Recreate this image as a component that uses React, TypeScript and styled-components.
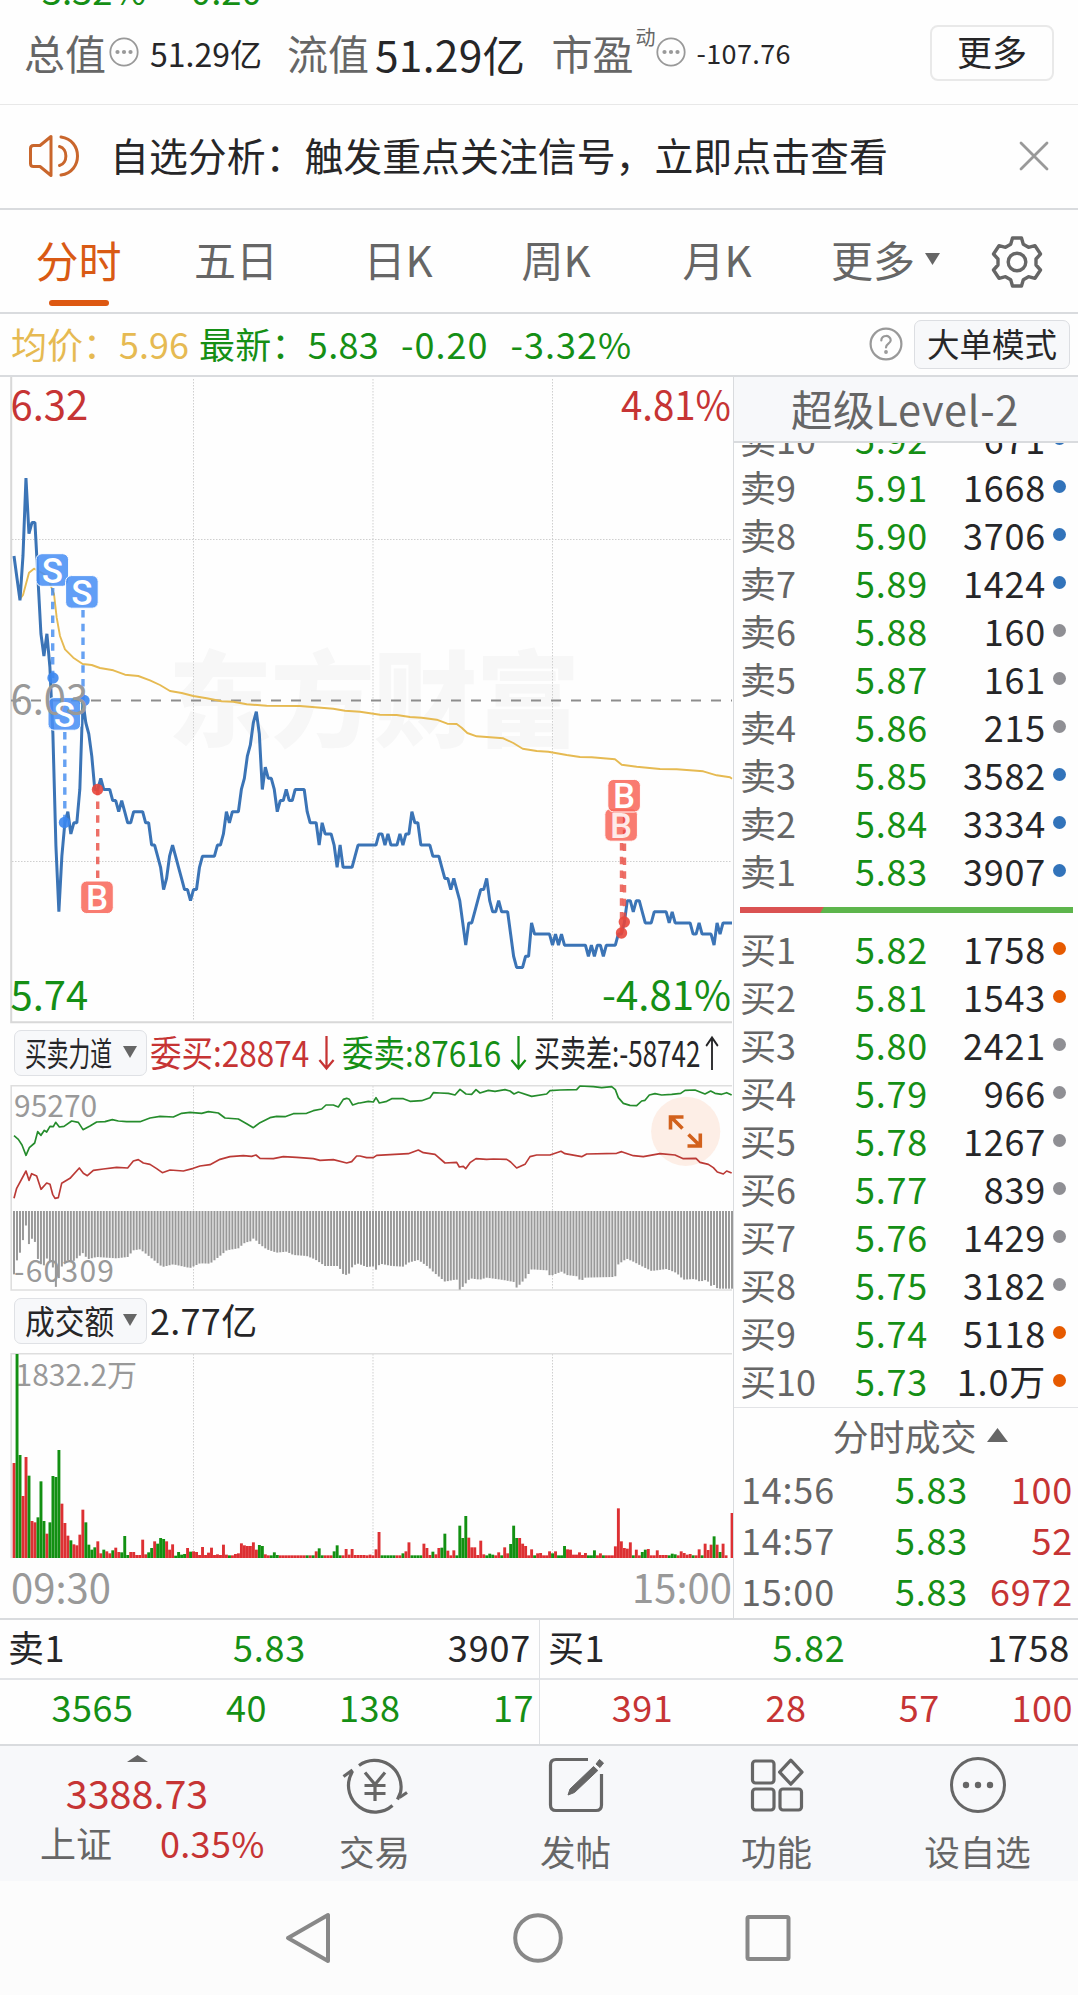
import React from "react";
import styled, { createGlobalStyle } from "styled-components";

const C = {
  green: "#158f15",
  red: "#c63434",
  blue: "#3b74b6",
  gold: "#e6ba52",
  orange: "#d95a14",
  text: "#262628",
  sub: "#666666",
  mute: "#999999",
  line: "#d9dbde",
  panel: "#f7f8fa",
};

const Global = createGlobalStyle`
  * { box-sizing: border-box; }
  body { margin: 0; background: #fefefe; }
  svg { display: block; flex: none; }
`;

const Page = styled.div`
  width: 1078px;
  height: 1995px;
  overflow: hidden;
  display: flex;
  flex-direction: column;
  background: #fefefe;
  color: ${C.text};
  font-family: "Noto Sans CJK SC", "Noto Sans", sans-serif;
`;

const Txt = styled.span<{ $s?: number; $c?: string; $ml?: number; $ls?: number }>`
  font-size: ${(p) => p.$s ?? 36}px;
  line-height: 1.2;
  color: ${(p) => p.$c ?? "inherit"};
  margin-left: ${(p) => p.$ml ?? 0}px;
  letter-spacing: ${(p) => p.$ls ?? 0}px;
  white-space: pre;
`;

/* ---------- header ---------- */

const ClippedLine = styled.div`
  height: 12px;
  flex: none;
  display: flex;
  align-items: flex-end;
  padding-left: 29px;
  margin-bottom: -12px;
`;

const Stats = styled.div`
  height: 105px;
  flex: none;
  display: flex;
  align-items: center;
  padding: 2px 24px 0 24px;
  border-bottom: 1px solid #e8e8e8;
`;

const StatItem = styled.div<{ $ml?: number }>`
  display: flex;
  align-items: center;
  margin-left: ${(p) => p.$ml ?? 0}px;
`;

const Icon = styled.div<{ $ml?: number }>`
  margin: 0 0 2px ${(p) => p.$ml ?? 0}px;
`;

const Sup = styled.sup`
  font-size: 20px;
  line-height: 20px;
  color: ${C.sub};
  align-self: flex-start;
  margin: -1px 0 0 2px;
  vertical-align: top;
`;

const MoreButton = styled.div`
  margin-left: auto;
  width: 124px;
  height: 56px;
  border: 2px solid #e9e9e9;
  border-radius: 8px;
  display: flex;
  align-items: center;
  justify-content: center;
  padding-bottom: 4px;
  font-size: 35px;
  line-height: 42px;
`;

const Notice = styled.div`
  height: 105px;
  flex: none;
  display: flex;
  align-items: center;
  padding: 0 29px 2px 27px;
  border-bottom: 2px solid ${C.line};
`;

const NoticeText = styled(Txt)`
  padding-bottom: 3px;
`;

const Push = styled.div`
  margin-left: auto;
`;

const Tabs = styled.div`
  height: 104px;
  flex: none;
  display: flex;
  border-bottom: 2px solid ${C.line};
`;

const Tab = styled.div<{ $w: number; $on?: boolean }>`
  width: ${(p) => p.$w}px;
  height: 102px;
  flex: none;
  display: flex;
  flex-direction: column;
  align-items: center;
  padding-top: 24px;
  font-size: ${(p) => (p.$on ? 43 : 42)}px;
  line-height: 50px;
  color: ${(p) => (p.$on ? C.orange : C.sub)};
`;

const Underline = styled.i`
  width: 60px;
  height: 6px;
  margin-top: 16px;
  border-radius: 3px;
  background: #dd5812;
`;

const MoreTab = styled.div`
  display: flex;
  align-items: center;
  gap: 10px;
  margin-left: 28px;
  color: ${C.sub};
  font-size: 42px;
  line-height: 50px;
  padding-bottom: 4px;
`;

const GearBox = styled.div`
  margin-left: auto;
  padding: 25px 34px 0 0;
`;

const Summary = styled.div`
  height: 63px;
  flex: none;
  display: flex;
  align-items: center;
  padding: 0 8px 2px 11px;
  border-bottom: 2px solid ${C.line};
`;

const ModeButton = styled.div`
  width: 156px;
  height: 49px;
  margin: 2px 0 0 11px;
  border: 1px solid #dcdee2;
  border-radius: 7px;
  background: ${C.panel};
  display: flex;
  align-items: center;
  justify-content: center;
  padding-bottom: 3px;
  font-size: 32.5px;
  line-height: 40px;
`;

/* ---------- body ---------- */

const Main = styled.div`
  height: 1241px;
  flex: none;
  display: grid;
  grid-template-columns: 733px 345px;
`;

const Charts = styled.div`
  display: flex;
  flex-direction: column;
`;

const ToolRow = styled.div<{ $h: number; $pt: number }>`
  height: ${(p) => p.$h}px;
  flex: none;
  padding: ${(p) => p.$pt}px 0 0 14px;
  display: flex;
  align-items: flex-start;
`;

const Pill = styled.div`
  width: 133px;
  height: 46px;
  flex: none;
  border: 1px solid #dfe1e5;
  border-radius: 7px;
  background: ${C.panel};
  display: flex;
  align-items: center;
  justify-content: space-between;
  padding: 0 9px 2px 10px;
`;

const Narrow = styled.span<{ $w: number; $sx: number; $s: number; $c?: string; $ml?: number }>`
  display: block;
  flex: none;
  width: ${(p) => p.$w}px;
  margin-left: ${(p) => p.$ml ?? 0}px;
  font-size: ${(p) => p.$s}px;
  line-height: 42px;
  white-space: pre;
  color: ${(p) => p.$c ?? C.text};
  transform: scaleX(${(p) => p.$sx});
  transform-origin: left center;
`;

const ArrowBox = styled.div<{ $ml: number }>`
  margin: 5px 0 0 ${(p) => p.$ml}px;
`;

const Times = styled.div`
  flex: 1;
  display: flex;
  justify-content: space-between;
  padding: 3px 1px 0 11px;
`;

const Book = styled.div`
  border-left: 1px solid ${C.line};
  display: flex;
  flex-direction: column;
`;

const BookHead = styled.div`
  height: 66px;
  flex: none;
  display: flex;
  justify-content: center;
  padding: 6px 2px 0 0;
  background: ${C.panel};
  border-bottom: 2px solid ${C.line};
  color: ${C.sub};
  font-size: 41.5px;
  line-height: 50px;
  letter-spacing: 0.7px;
`;

const Asks = styled.div`
  height: 451px;
  flex: none;
  overflow: hidden;
  display: flex;
  flex-direction: column;
  justify-content: flex-end;
`;

const Bids = styled.div`
  height: 484px;
  flex: none;
  border-bottom: 1px solid #e2e3e6;
`;

const Level = styled.div`
  height: 48px;
  flex: none;
  display: grid;
  grid-template-columns: 115px 76px 1fr 13px;
  align-items: center;
  padding: 0 12px 0 6px;
  font-size: 36px;
  line-height: 44px;
  letter-spacing: 0.8px;
  white-space: nowrap;
`;

const LevelName = styled.span`
  color: ${C.sub};
  letter-spacing: 0;
`;

const Price = styled.span`
  color: ${C.green};
`;

const Volume = styled.span`
  text-align: right;
  padding-right: 7px;
`;

const Dot = styled.i<{ $c: string }>`
  width: 13px;
  height: 13px;
  border-radius: 50%;
  background: ${(p) => p.$c};
`;

const Ratio = styled.div`
  height: 6px;
  flex: none;
  margin: 13px 5px 11px 6px;
  background: linear-gradient(120deg, #da5252 0 72px, #5db54c 73px);
`;

const TradesHead = styled.div`
  height: 57px;
  flex: none;
  display: flex;
  justify-content: center;
  align-items: center;
  gap: 10px;
  padding: 0 0 4px 37px;
  margin-right: 9px;
  color: ${C.sub};
  font-size: 36px;
  line-height: 44px;
`;

const Trade = styled.div`
  height: 51px;
  flex: none;
  display: grid;
  grid-template-columns: 154px 76px 1fr;
  align-items: center;
  padding: 0 5px 5px 7px;
  font-size: 36px;
  line-height: 44px;
  letter-spacing: 0.8px;
  color: ${C.sub};
`;

const TradeVol = styled.span`
  color: ${C.red};
  text-align: right;
`;

/* ---------- quote strip ---------- */

const Strip = styled.div`
  height: 128px;
  flex: none;
  display: grid;
  grid-template-columns: 539px 539px;
  border-top: 2px solid ${C.line};
  border-bottom: 2px solid ${C.line};
`;

const Side = styled.div<{ $c: string; $div?: boolean }>`
  border-left: ${(p) => (p.$div ? "1px solid #dfe1e4" : "0")};
  color: ${(p) => p.$c};
`;

const Best = styled.div`
  height: 60px;
  display: grid;
  grid-template-columns: 1fr 1fr 1fr;
  align-items: center;
  padding: 0 8px 7px 8px;
  border-bottom: 2px solid #e2e4e7;
  font-size: 36px;
  line-height: 44px;
  color: ${C.text};
  letter-spacing: 0.4px;
  & > :nth-child(2) { text-align: center; color: ${C.green}; letter-spacing: 0.8px; }
  & > :nth-child(3) { text-align: right; letter-spacing: 0.8px; }
`;

const Ticks = styled.div`
  height: 60px;
  display: grid;
  grid-template-columns: repeat(4, 1fr);
  align-items: center;
  padding: 0 5px 8px 0;
  text-align: right;
  font-size: 36px;
  line-height: 44px;
  letter-spacing: 0.5px;
`;

/* ---------- bottom bars ---------- */

const BottomBar = styled.div`
  height: 135px;
  flex: none;
  display: grid;
  grid-template-columns: 274px repeat(4, 201px);
  background: ${C.panel};
`;

const IndexBox = styled.div`
  display: flex;
  flex-direction: column;
  align-items: center;
  padding-top: 9px;
  color: ${C.red};
`;

const IndexValue = styled(Txt)`
  padding-top: 6px;
`;

const IndexRow = styled.div`
  width: 274px;
  display: flex;
  margin-top: 6px;
`;

const NavItem = styled.div`
  display: flex;
  flex-direction: column;
  align-items: center;
  padding-top: 9px;
  gap: 14px;
  color: ${C.sub};
  font-size: 35.5px;
  line-height: 44px;
`;

const SystemBar = styled.div`
  flex: 1;
  background: #fcfcfc;
  display: flex;
  justify-content: space-between;
  padding: 29px 285px 0 283px;
`;

/* ---------- data ---------- */

// One entry per trading minute: ticks (0.01) below the previous close of 6.03.
const priceTicks = [
  -13, -11, -9, -13, -20, -15, -16, -16, -11, -6, -4, -6, -3, 3, 13, 19, 14, 11, 10, 12, 11, 11, 8, 0, 2, 3, 5, 8, 8, 7,
  8, 8, 8, 9, 9, 10, 9, 10, 11, 11, 10, 10, 10, 10, 11, 11, 13, 13, 14, 15, 17, 16, 14, 13, 14, 15, 16, 17, 17, 18,
  17, 17, 15, 14, 14, 14, 14, 14, 13, 13, 12, 10, 11, 10, 10, 10, 8, 7, 5, 4, 2, 1, 3, 8, 6, 7, 7, 8, 10, 9,
  9, 8, 9, 9, 8, 8, 8, 8, 10, 11, 11, 11, 13, 11, 12, 12, 12, 13, 15, 13, 15, 15, 15, 15, 14, 13, 13, 13, 13, 13,
  13, 13, 12, 12, 13, 12, 13, 13, 13, 12, 13, 12, 12, 10, 11, 11, 13, 13, 13, 13, 14, 14, 14, 15, 16, 16, 17, 16, 17, 18,
  20, 22, 20, 20, 19, 18, 17, 17, 16, 18, 19, 19, 18, 19, 19, 19, 21, 23, 24, 24, 24, 23, 23, 20, 21, 21, 21, 21, 21, 21,
  22, 21, 22, 21, 22, 22, 22, 22, 22, 22, 22, 22, 23, 22, 23, 22, 22, 23, 22, 22, 22, 22, 21, 21, 20, 18, 18, 19, 18, 18,
  19, 20, 20, 20, 19, 19, 19, 19, 19, 20, 19, 20, 20, 20, 20, 20, 20, 21, 21, 20, 21, 21, 21, 21, 22, 20, 21, 20, 20, 20, 20,
];

const averageLine =
  "20,598 23,594 29,571.7 34,567.7 44,573 50,583 54,593 56.7,616.7 60,635 65,648.3 73.3,656.7 82.7,663 91.7,664 100,667 113.3,669.3 125,673.7 138.3,675 150,679.3 160,684 170,690 181.7,692 193.3,695 206.7,697.3 221.7,700.3 233.3,700.7 246.7,703.3 266.7,704.7 300,705 333.3,707.7 345,709.7 360,710.7 380,713.7 396.7,714 410,716 421.7,716.7 436.7,718.7 447.3,722.7 456.7,723 461.7,726.7 467.3,732 476.7,735.3 503.3,737.3 513.3,742 522.7,747.7 536.7,750 548.3,750.7 566.7,754 580,756 591.7,756.3 615,758.3 621.7,763.7 636.7,765.7 660,768 676.7,768.3 703.3,770.3 716.7,774.3 730,776.3 732,777.7";

type Pt = [number, number];

const parse = (s: string, dx = 0): Pt[] =>
  s.split(" ").map((p) => {
    const [x, y] = p.split(",").map(Number);
    return [x + dx, y] as Pt;
  });

// Order-pressure series use a plot space three times finer than the pixel grid; the
// afternoon half is stored relative to x = 1080.
const half = 1080;

const sellLine = [
  ...parse("42,344 55,355 66,372 78,403 88,380 104,366 113,332 123,343 133,328 140,333 150,316 160,317 167,304 178,318 192,316 215,300 235,304 249,326 270,315 290,303 315,302 337,296 355,300 380,302 420,302 450,291 480,286 520,288 545,277 570,274 605,277 625,272 655,276 675,291 715,294 740,308 760,320 780,305 810,290 830,286 855,287 880,278 920,277 940,269 965,264 978,252 1000,252 1015,258 1030,235 1040,232 1048,235 1058,252 1076,246"),
  ...parse("0,246 25,241 40,243 48,230 58,246 80,241 95,233 130,233 150,241 185,239 210,230 220,215 240,216 265,217 285,222 300,205 318,219 335,220 348,206 360,216 385,208 405,211 435,206 450,210 462,219 475,213 515,226 560,219 570,209 600,207 650,206 660,195 700,197 725,200 755,197 766,206 775,230 790,247 810,253 830,254 845,240 855,238 868,222 885,218 905,222 935,220 962,217 975,208 1005,207 1035,219 1052,210 1065,217 1085,220 1100,215 1115,222", half),
];

const buyLine = [
  ...parse("42,532 50,502 78,450 87,478 95,458 110,465 123,505 140,486 150,490 158,520 165,532 175,530 185,487 210,472 238,441 250,457 262,464 280,448 310,444 350,439 383,441 400,420 415,416 430,426 450,430 470,443 487,455 510,447 550,450 580,442 600,435 630,431 660,415 690,407 730,404 755,406 768,402 780,412 820,413 850,407 890,409 940,413 960,418 1000,416 1040,426 1055,422 1070,405"),
  ...parse("0,405 20,410 40,410 50,403 145,398 175,387 190,395 225,400 255,426 290,424 298,438 310,436 317,443 330,425 348,413 380,415 400,414 440,415 452,423 470,441 495,430 510,407 530,402 570,402 603,391 615,398 665,407 680,399 770,397 785,392 820,404 850,407 900,398 945,402 970,413 1008,412 1020,424 1045,430 1060,440 1072,453 1090,459 1100,450 1115,456", half),
];

const diffProfile = [
  ...parse("42,760 51,718 60,695 69,657 78,613 87,670 96,653 105,663 114,715 123,730 132,733 141,712 150,722 159,740 168,800 177,770 186,735 200,715 215,725 235,708 250,695 262,715 290,708 350,712 383,708 400,688 420,685 440,700 465,720 487,738 520,730 570,741 600,727 630,728 660,705 680,688 715,682 735,665 755,660 762,650 775,667 800,685 830,695 860,692 880,702 920,705 945,715 975,735 1015,735 1030,760 1045,763 1055,740 1070,727"),
  ...parse("0,730 20,738 40,736 48,746 60,728 95,735 130,737 145,725 175,717 205,738 220,753 255,782 290,775 299,806 308,798 330,772 360,776 380,770 430,777 462,783 470,800 480,790 497,772 515,745 560,748 570,765 605,752 620,762 652,766 663,783 672,770 760,768 768,765 775,730 800,713 820,722 850,738 875,750 920,744 950,756 970,776 1005,774 1020,782 1040,776 1055,797 1065,790 1072,803 1120,803", half),
];

const sample = (pts: Pt[], x: number) => {
  const k = pts.findIndex((p) => p[0] >= x);
  if (k <= 0) return k === 0 ? pts[0][1] : pts[pts.length - 1][1];
  const [a, b] = [pts[k - 1], pts[k]];
  return a[1] + ((b[1] - a[1]) * (x - a[0])) / (b[0] - a[0]);
};

// Turnover per minute: r = up, g = down, then the height; "x" repeats a bar.
const turnover =
  "r285 g612 g309 r186 r303 g247 r111 r107 g122 g230 g111 r73 g107 g246 g243 g324 r163 r105 r67 g53 r41 r38 r70 r145 g107 g40 g25 g32 r50 r14 g25 r20 r14 g23 r31 r18 g17 g66 g9 r18 r18 r9 r9 r55 r11 g17 g30 r50 g43 g60 g57 r50 r25 r41 g7 g18 g10 g12 r30 g19 r20 r18 r9 r33 r9 r16 r31 r9 r11 r9 r40 r10 g8 r8 r12 r14 r44 r38 r36 r36 r47 r25 g39 g36 r11 r8 g8 g17 g9 r8x9 g8 r8 g8 r20 g29 g8 r8x3 g20 g38 g8 r8 r27 r10 r27 r9x4 r8 r10 r8 r26 r78 g8x5 r8 r8 g14 r20 r47 g8x4 r43 r30 r9 g19 r11 r30 g31 g73 r22 r8 r23 g8 g97 g60 g126 r61 r32 r32 r9 r52 r11 g8 g13 g10 r8 r17 g8 r32 r14 g42 g97 g60 r60 r43 r36 r8 r26 g8 r14 r15 r8 r8 r20 g14 r20 g8 g8 g36 r26 r25 r10 r10 r17 r9 r15 g8 g8 g23 r8 r14 g8 r8x3 r35 r149 r50 r30 r28 r47 g8 r25 r8 g18 g25 r27 r8 r8 r23 r9x3 g8 g13 g11 r8 r20 r15 r10 r12 g8 r8 r26 g8 r43 r24 r40 g65 r40 g18 r43 r8 r0 r135";

const turnoverBars = turnover.split(" ").flatMap((t) => {
  const [h, n] = t.slice(1).split("x").map(Number);
  return Array.from({ length: n || 1 }, () => ({ up: t[0] === "r", h }));
});

const blueDot = "#3273ba";
const greyDot = "#8f8f94";
const orangeDot = "#e65a00";

const asks: [string, string, string, string][] = [
  ["卖10", "5.92", "671", blueDot],
  ["卖9", "5.91", "1668", blueDot],
  ["卖8", "5.90", "3706", blueDot],
  ["卖7", "5.89", "1424", blueDot],
  ["卖6", "5.88", "160", greyDot],
  ["卖5", "5.87", "161", greyDot],
  ["卖4", "5.86", "215", greyDot],
  ["卖3", "5.85", "3582", blueDot],
  ["卖2", "5.84", "3334", blueDot],
  ["卖1", "5.83", "3907", blueDot],
];

const bids: [string, string, string, string][] = [
  ["买1", "5.82", "1758", orangeDot],
  ["买2", "5.81", "1543", orangeDot],
  ["买3", "5.80", "2421", greyDot],
  ["买4", "5.79", "966", greyDot],
  ["买5", "5.78", "1267", greyDot],
  ["买6", "5.77", "839", greyDot],
  ["买7", "5.76", "1429", greyDot],
  ["买8", "5.75", "3182", greyDot],
  ["买9", "5.74", "5118", orangeDot],
  ["买10", "5.73", "1.0万", orangeDot],
];

const trades = [
  ["14:56", "5.83", "100"],
  ["14:57", "5.83", "52"],
  ["15:00", "5.83", "6972"],
];

type Mark = { k: "S" | "B"; x: number; y: number; lx: number; from: number; dotX: number; dotY: number };

const marks: Mark[] = [
  { k: "S", x: 36, y: 552.7, lx: 52.7, from: 587, dotX: 53, dotY: 677 },
  { k: "S", x: 65.6, y: 574.6, lx: 83, from: 609, dotX: 84, dotY: 699.5 },
  { k: "S", x: 48, y: 696.6, lx: 64.8, from: 731, dotX: 64.5, dotY: 821.5 },
  { k: "B", x: 80.7, y: 880, lx: 97.7, from: 877, dotX: 97.5, dotY: 788.5 },
  { k: "B", x: 604.8, y: 807.6, lx: 621.5, from: 842, dotX: 621.5, dotY: 932 },
  { k: "B", x: 607.8, y: 778.4, lx: 624.5, from: 815, dotX: 624.3, dotY: 921 },
];

const gridX = [193.5, 373, 552.5];
const minuteX = (i: number) => 14 + i * 2.9917;

/* ---------- icons ---------- */

const InfoDots = () => (
  <svg width="30" height="30" viewBox="0 0 30 30">
    <circle cx="15" cy="15" r="13.7" fill="none" stroke="#999" strokeWidth="1.8" />
    {[8.5, 15, 21.5].map((x) => (
      <circle key={x} cx={x} cy="15" r="2.1" fill="#999" />
    ))}
  </svg>
);

const Speaker = () => (
  <svg width="54" height="46" viewBox="0 0 54 46" fill="none" stroke="#c9662c" strokeWidth="3" strokeLinejoin="round" strokeLinecap="round">
    <path d="M24 3.5V42.5L13 33.5H6.500Q3.500 33.500 3.500 30.500V15.500Q3.500 12.500 6.500 12.500H13Z" />
    <path d="M32.500 13.500C41 15.500 41 30.500 32.500 32.500" />
    <path d="M34 4C56 7 56 39 34 42" />
  </svg>
);

const Close = () => (
  <svg width="30" height="30" viewBox="0 0 30 30" stroke="#999" strokeWidth="2.8" strokeLinecap="round">
    <path d="M2 2L28 28M28 2L2 28" />
  </svg>
);

const Caret = ({ w, h, up, c = C.sub }: { w: number; h: number; up?: boolean; c?: string }) => (
  <svg width={w} height={h} viewBox="0 0 10 10" preserveAspectRatio="none">
    <path d={up ? "M5 0L10 10H0Z" : "M0 0H10L5 10Z"} fill={c} />
  </svg>
);

const Gear = () => (
  <svg width="54" height="54" viewBox="0 0 54 54" fill="none" stroke={C.sub} strokeWidth="3.4" strokeLinejoin="round">
    <path d="M22.500 3H31.500L33.300 9.300L38.500 12.300L45 10.700L50.500 19L46 24V30L50.500 35L45 43.300L38.500 41.700L33.300 44.700L31.500 51H22.500L20.700 44.700L15.500 41.700L9 43.300L3.500 35L8 30V24L3.500 19L9 10.700L15.500 12.300L20.700 9.300Z" />
    <circle cx="27" cy="27" r="8.800" />
  </svg>
);

const Help = () => (
  <svg width="34" height="34" viewBox="0 0 34 34" fill="none" stroke="#999" strokeWidth="2.2" strokeLinecap="round">
    <circle cx="17" cy="17" r="15.400" />
    <path d="M12.300 13.500C12.300 7.500 21.700 7.500 21.700 13.300C21.700 16.800 17 16.700 17 20.500" />
    <circle cx="17" cy="25" r=".8" fill="#999" />
  </svg>
);

const Arrow = ({ up, c, w, ml }: { up?: boolean; c: string; w: number; ml: number }) => (
  <ArrowBox $ml={ml}>
    <svg width={w} height="36" viewBox="0 0 18 36" preserveAspectRatio="none" fill="none" stroke={c} strokeWidth="2.4">
      <path d={up ? "M9 35V2M1.500 11L9 2.500L16.500 11" : "M9 1V34M1.500 25L9 33.500L16.500 25"} />
    </svg>
  </ArrowBox>
);

const TradeIcon = () => (
  <svg width="68" height="60" viewBox="0 0 68 60" fill="none" stroke={C.sub} strokeWidth="3.200">
    <path d="M18 10.500A26.500 26.500 0 0 1 59.500 37.500L56.500 44.500" />
    <path d="M58.500 42.500L66 37.500" />
    <path d="M51.500 50.500A26.500 26.500 0 0 1 9.500 20.500L11.500 16" />
    <path d="M11.500 15L2.500 21.500" />
    <path d="M24 17.500L34 29.500L44 17.500M34 29.500V46M23.500 30.500H44.500M23.500 38.500H44.500" />
  </svg>
);

const PostIcon = () => (
  <svg width="60" height="60" viewBox="0 0 60 60" fill="none" stroke={C.sub} strokeWidth="3.200">
    <path d="M42 4.500H10Q4.500 4.500 4.500 10V50Q4.500 55.500 10 55.500H50Q55.500 55.500 55.500 50V19" />
    <path d="M53.500 4.500L57.500 8L54 12.500L50 9Z" fill={C.sub} strokeWidth="1" />
    <path d="M47.500 11.500L51.800 15.500L28.500 37.500L22 40L24 34Z" fill={C.sub} strokeWidth="1" />
  </svg>
);

const AppsIcon = () => (
  <svg width="60" height="60" viewBox="0 0 60 60" fill="none" stroke={C.sub} strokeWidth="3.200" strokeLinejoin="round">
    <rect x="5.500" y="6" width="21.500" height="22" rx="3" />
    <rect x="5.500" y="34" width="21.500" height="21" rx="3" />
    <rect x="33" y="34" width="21.500" height="21" rx="3" />
    <path d="M43.800 5.200L55 17.200L43.800 29.200L32.600 17.200Z" />
  </svg>
);

const DotsIcon = () => (
  <svg width="60" height="60" viewBox="0 0 60 60">
    <circle cx="30" cy="30" r="26.500" fill="none" stroke={C.sub} strokeWidth="3" />
    {[18, 30, 42].map((x) => (
      <circle key={x} cx={x} cy="30" r="3.200" fill={C.sub} />
    ))}
  </svg>
);

/* ---------- charts ---------- */

const GridLines = ({ y1, y2 }: { y1: number; y2: number }) => (
  <g stroke="#cfcfcf" strokeWidth="1" strokeDasharray="1.500 1.500">
    {gridX.map((x) => (
      <line key={x} x1={x} x2={x} y1={y1} y2={y2} />
    ))}
  </g>
);

const PriceChart = () => (
  <svg width="733" height="647" viewBox="0 376 733 647" fontFamily='"Noto Sans CJK SC", sans-serif'>
    <text x="168" y="738" fontSize="104" fontWeight="900" fill="#f7f7f7" textLength="412">东方财富</text>
    <GridLines y1={378} y2={1020} />
    <g stroke="#cfcfcf" strokeDasharray="1.500 1.500">
      <line x1="12" x2="732" y1="538.500" y2="538.500" />
      <line x1="12" x2="732" y1="860.500" y2="860.500" />
    </g>
    <path d="M11.200 376V1021.200H732" fill="none" stroke="#d8d8d8" strokeWidth="2" />
    <line x1="11" x2="732" y1="699.500" y2="699.500" stroke="#8d8d8d" strokeWidth="1.800" strokeDasharray="10 10" />
    <polyline points={averageLine} fill="none" stroke={C.gold} strokeWidth="1.900" strokeLinejoin="round" />
    <polyline
      points={priceTicks.map((t, i) => `${minuteX(i)},${699.5 + t * 11.12}`).join(" ")}
      fill="none"
      stroke={C.blue}
      strokeWidth="3"
      strokeLinejoin="bevel"
    />
    {marks.map((m, i) => {
      const fill = m.k === "S" ? "#4a90f5" : "#f8695c";
      const dark = m.k === "S" ? "#3b86ee" : "#e8473c";
      return (
        <g key={i}>
          <rect x={m.x} y={m.y} width="32.600" height="32.600" rx="6" fill={fill} fillOpacity=".87" stroke="#fff" strokeWidth="1" />
          <line x1={m.lx} x2={m.lx} y1={m.from} y2={m.dotY} stroke={dark} strokeOpacity=".78" strokeWidth="3.400" strokeDasharray="7.500 6.300" />
          <circle cx={m.dotX} cy={m.dotY} r="5.700" fill={dark} fillOpacity=".9" />
        </g>
      );
    })}
    <g fontSize="40">
      <text x="10.500" y="419" fill={C.red}>6.32</text>
      <text x="621" y="419" fill={C.red} textLength="110" lengthAdjust="spacingAndGlyphs">4.81%</text>
      <text x="10.500" y="713" fill={C.mute}>6.03</text>
      <text x="10.500" y="1009" fill={C.green}>5.74</text>
      <text x="602" y="1009" fill={C.green} textLength="129" lengthAdjust="spacingAndGlyphs">-4.81%</text>
    </g>
    <g fontSize="35" fontWeight="500" fontFamily="Roboto, sans-serif" fill="#fff" textAnchor="middle">
      {marks.map((m, i) => (
        <text key={i} x={m.x + 16.3} y={m.y + 29} fillOpacity={i === 4 ? 0.85 : 1}>{m.k}</text>
      ))}
    </g>
  </svg>
);

const PressureChart = () => (
  <svg width="733" height="207" viewBox="0 1084 733 207" fontFamily='"Noto Sans CJK SC", sans-serif'>
    <GridLines y1={1085} y2={1288} />
    <path d="M732 1084.700H11.200V1289H732" fill="none" stroke="#dedede" strokeWidth="1.600" />
    <g transform="translate(0 1020) scale(.33333)">
      {Array.from({ length: 241 }, (_, i) => {
        const x = 42 + i * 8.975;
        return <rect key={i} x={x - 3} y="570" width="6" height={sample(diffProfile, x) - 570} fill="#999" />;
      })}
    </g>
    <circle cx="685.700" cy="1130.300" r="34.600" fill="#fdeee6" />
    <g transform="translate(0 1020) scale(.33333)" fill="none" strokeWidth="5" strokeLinejoin="round">
      <polyline points={sellLine.join(" ")} stroke="#258c2c" />
      <polyline points={buyLine.join(" ")} stroke="#bb3a36" />
    </g>
    <g fill="none" stroke="#d2611c" strokeWidth="3.600">
      <path d="M670.500 1128.500V1116H683.500M671.500 1116.500L682.500 1127.500" />
      <path d="M700.300 1132.500V1145H687.500M699.800 1144.500L688.500 1133.500" />
    </g>
    <g fontSize="30" fill={C.mute}>
      <text x="14" y="1116">95270</text>
      <text x="14" y="1280.500" textLength="100">-60309</text>
    </g>
  </svg>
);

const TurnoverChart = () => (
  <svg width="733" height="206" viewBox="0 1352 733 206" fontFamily='"Noto Sans CJK SC", sans-serif'>
    <GridLines y1={1353} y2={1556} />
    <path d="M732 1352.700H11.200V1557" fill="none" stroke="#dedede" strokeWidth="1.600" />
    <text x="15.500" y="1385" fontSize="30" fill={C.mute}>1832.2万</text>
    {turnoverBars.map((b, i) => (
      <rect key={i} x={minuteX(i) - 1.4} y={1557 - b.h / 3} width="2.900" height={b.h / 3} fill={b.up ? "#dd3033" : "#129012"} />
    ))}
  </svg>
);

/* ---------- page ---------- */

const Levels = ({ rows }: { rows: [string, string, string, string][] }) => (
  <>
    {rows.map(([name, price, vol, dot]) => (
      <Level key={name}>
        <LevelName>{name}</LevelName>
        <Price>{price}</Price>
        <Volume>{vol}</Volume>
        <Dot $c={dot} />
      </Level>
    ))}
  </>
);

const QuoteSide = ({ best, ticks, c, div }: { best: string[]; ticks: string[]; c: string; div?: boolean }) => (
  <Side $c={c} $div={div}>
    <Best>
      {best.map((t) => (
        <span key={t}>{t}</span>
      ))}
    </Best>
    <Ticks>
      {ticks.map((t) => (
        <span key={t}>{t}</span>
      ))}
    </Ticks>
  </Side>
);

export default function App() {
  return (
    <Page>
      <Global />
      <ClippedLine>
        <Txt $c={C.green} $s={36.5}>-3.32%</Txt>
        <Txt $c={C.green} $s={36.5} $ml={32}>-0.20</Txt>
      </ClippedLine>
      <Stats>
        <StatItem>
          <Txt $s={41} $c={C.sub}>总值</Txt>
          <Icon $ml={3}><InfoDots /></Icon>
          <Txt $s={32} $ml={11}>51.29亿</Txt>
        </StatItem>
        <StatItem $ml={25}>
          <Txt $s={41} $c={C.sub}>流值</Txt>
          <Txt $s={42.5} $ml={6} $ls={0.3}>51.29亿</Txt>
        </StatItem>
        <StatItem $ml={26}>
          <Txt $s={41} $c={C.sub}>市盈</Txt>
          <Sup>动</Sup>
          <Icon $ml={1}><InfoDots /></Icon>
          <Txt $s={27} $ml={10} $ls={0.4}>-107.76</Txt>
        </StatItem>
        <MoreButton>更多</MoreButton>
      </Stats>

      <Notice>
        <Speaker />
        <NoticeText $s={38.9} $ml={29}>自选分析：触发重点关注信号，立即点击查看</NoticeText>
        <Push><Close /></Push>
      </Notice>

      <Tabs>
        <Tab $w={157} $on>
          分时
          <Underline />
        </Tab>
        <Tab $w={158}>五日</Tab>
        <Tab $w={166}>日K</Tab>
        <Tab $w={150}>周K</Tab>
        <Tab $w={172}>月K</Tab>
        <MoreTab>
          更多
          <Caret w={15} h={12} />
        </MoreTab>
        <GearBox><Gear /></GearBox>
      </Tabs>

      <Summary>
        <Txt $c={C.gold}>均价：5.96</Txt>
        <Txt $c={C.green} $ml={10} $ls={0.3}>最新：5.83</Txt>
        <Txt $c={C.green} $ml={22} $ls={1}>-0.20</Txt>
        <Txt $c={C.green} $ml={22} $ls={1}>-3.32%</Txt>
        <Push><Help /></Push>
        <ModeButton>大单模式</ModeButton>
      </Summary>

      <Main>
        <Charts>
          <PriceChart />
          <ToolRow $h={61} $pt={6}>
            <Pill>
              <Narrow $w={88} $sx={0.66} $s={33}>买卖力道</Narrow>
              <Caret w={14} h={12} />
            </Pill>
            <Narrow $w={160} $sx={0.875} $s={36} $c={C.red} $ml={3}>委买:28874</Narrow>
            <Arrow c={C.red} w={17} ml={8} />
            <Narrow $w={160} $sx={0.875} $s={36} $c={C.green} $ml={7}>委卖:87616</Narrow>
            <Arrow c={C.green} w={17} ml={8} />
            <Narrow $w={165} $sx={0.722} $s={36} $ml={7}>买卖差:-58742</Narrow>
            <Arrow up c={C.text} w={14} ml={6} />
          </ToolRow>
          <PressureChart />
          <ToolRow $h={61} $pt={6}>
            <Pill>
              <Narrow $w={88} $sx={0.9} $s={33}>成交额</Narrow>
              <Caret w={14} h={12} />
            </Pill>
            <Txt $ml={3} $ls={0.3}>2.77亿</Txt>
          </ToolRow>
          <TurnoverChart />
          <Times>
            <Txt $s={40} $c={C.mute}>09:30</Txt>
            <Txt $s={40} $c={C.mute}>15:00</Txt>
          </Times>
        </Charts>

        <Book>
          <BookHead>超级Level-2</BookHead>
          <Asks><Levels rows={asks} /></Asks>
          <Ratio />
          <Bids><Levels rows={bids} /></Bids>
          <TradesHead>
            分时成交
            <Caret up w={21} h={14} />
          </TradesHead>
          {trades.map(([time, price, vol]) => (
            <Trade key={time}>
              <span>{time}</span>
              <Price>{price}</Price>
              <TradeVol>{vol}</TradeVol>
            </Trade>
          ))}
        </Book>
      </Main>

      <Strip>
        <QuoteSide c={C.green} best={["卖1", "5.83", "3907"]} ticks={["3565", "40", "138", "17"]} />
        <QuoteSide div c={C.red} best={["买1", "5.82", "1758"]} ticks={["391", "28", "57", "100"]} />
      </Strip>

      <BottomBar>
        <IndexBox>
          <Caret up w={21} h={7} />
          <IndexValue $s={39.5}>3388.73</IndexValue>
          <IndexRow>
            <Txt $c={C.sub} $ml={40}>上证</Txt>
            <Txt $ml={48} $ls={0.3}>0.35%</Txt>
          </IndexRow>
        </IndexBox>
        <NavItem><TradeIcon />交易</NavItem>
        <NavItem><PostIcon />发帖</NavItem>
        <NavItem><AppsIcon />功能</NavItem>
        <NavItem><DotsIcon />设自选</NavItem>
      </BottomBar>

      <SystemBar>
        <svg width="50" height="56" viewBox="0 0 50 56" fill="none" stroke="#888" strokeWidth="4" strokeLinejoin="round">
          <path d="M45 5V51L5 28Z" />
        </svg>
        <svg width="56" height="56" viewBox="0 0 56 56" fill="none" stroke="#888" strokeWidth="4">
          <circle cx="28" cy="28" r="22.800" />
        </svg>
        <svg width="50" height="56" viewBox="0 0 50 56" fill="none" stroke="#888" strokeWidth="4">
          <rect x="4.500" y="7" width="41" height="42" rx="1.500" />
        </svg>
      </SystemBar>
    </Page>
  );
}
